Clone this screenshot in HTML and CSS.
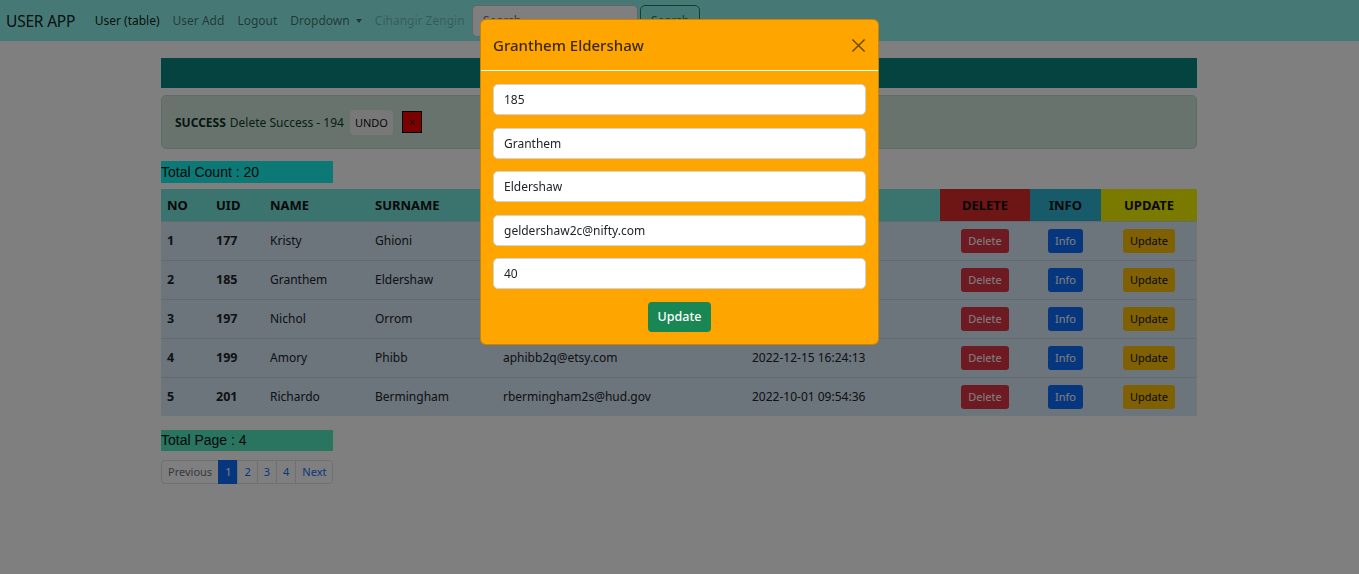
FILE: index.html
```html
<!DOCTYPE html>
<html lang="en">
<head>
<meta charset="utf-8">
<title>USER APP</title>
<link rel="stylesheet" href="styles.css">
</head>
<body>
<nav class="navbar">
  <a class="brand" href="#">USER APP</a>
  <ul class="nav">
    <li><a class="nav-link active" href="#">User (table)</a></li>
    <li><a class="nav-link" href="#">User Add</a></li>
    <li><a class="nav-link" href="#">Logout</a></li>
    <li><a class="nav-link dropdown" href="#">Dropdown <span class="caret"></span></a></li>
    <li><a class="nav-link disabled" href="#">Cihangir Zengin</a></li>
  </ul>
  <form class="search">
    <input class="search-input" type="text" placeholder="Search">
    <button class="search-btn" type="button">Search</button>
  </form>
</nav>

<main class="container">
  <div class="band"></div>
  <div class="alert">
    <strong>SUCCESS</strong>
    <span class="alert-text">Delete Success - 194</span>
    <button class="btn-undo" type="button">UNDO</button>
    <button class="btn-x" type="button">×</button>
  </div>
  <div class="count">Total Count : 20</div>
  <table class="table">
    <colgroup>
      <col class="c-no"><col class="c-uid"><col class="c-name"><col class="c-surname"><col class="c-email"><col class="c-date"><col class="c-del"><col class="c-info"><col class="c-upd">
    </colgroup>
    <thead>
      <tr>
        <th>NO</th>
        <th>UID</th>
        <th>NAME</th>
        <th>SURNAME</th>
        <th>EMAIL</th>
        <th>DATE</th>
        <th class="h-del">DELETE</th>
        <th class="h-info">INFO</th>
        <th class="h-upd">UPDATE</th>
      </tr>
    </thead>
    <tbody>
      <tr><td class="b">1</td><td class="b">177</td><td>Kristy</td><td>Ghioni</td><td>kghioni2m@example.com</td><td>2022-11-03 11:20:45</td><td class="ctr"><button class="btn btn-del">Delete</button></td><td class="ctr"><button class="btn btn-info">Info</button></td><td class="ctr"><button class="btn btn-upd">Update</button></td></tr>
      <tr><td class="b">2</td><td class="b">185</td><td>Granthem</td><td>Eldershaw</td><td>geldershaw2c@nifty.com</td><td>2022-09-21 08:12:10</td><td class="ctr"><button class="btn btn-del">Delete</button></td><td class="ctr"><button class="btn btn-info">Info</button></td><td class="ctr"><button class="btn btn-upd">Update</button></td></tr>
      <tr><td class="b">3</td><td class="b">197</td><td>Nichol</td><td>Orrom</td><td>norrom2o@example.com</td><td>2022-08-14 19:41:02</td><td class="ctr"><button class="btn btn-del">Delete</button></td><td class="ctr"><button class="btn btn-info">Info</button></td><td class="ctr"><button class="btn btn-upd">Update</button></td></tr>
      <tr><td class="b">4</td><td class="b">199</td><td>Amory</td><td>Phibb</td><td>aphibb2q@etsy.com</td><td>2022-12-15 16:24:13</td><td class="ctr"><button class="btn btn-del">Delete</button></td><td class="ctr"><button class="btn btn-info">Info</button></td><td class="ctr"><button class="btn btn-upd">Update</button></td></tr>
      <tr><td class="b">5</td><td class="b">201</td><td>Richardo</td><td>Bermingham</td><td>rbermingham2s@hud.gov</td><td>2022-10-01 09:54:36</td><td class="ctr"><button class="btn btn-del">Delete</button></td><td class="ctr"><button class="btn btn-info">Info</button></td><td class="ctr"><button class="btn btn-upd">Update</button></td></tr>
    </tbody>
  </table>
  <div class="pages">Total Page : 4</div>
  <ul class="pagination">
    <li class="pg disabled">Previous</li>
    <li class="pg active">1</li>
    <li class="pg">2</li>
    <li class="pg">3</li>
    <li class="pg">4</li>
    <li class="pg">Next</li>
  </ul>
</main>

<div class="backdrop"></div>
<div class="modal-wrap">
  <div class="modal">
    <div class="modal-header">
      <h5 class="modal-title">Granthem Eldershaw</h5>
      <button class="close" type="button" aria-label="Close">
        <svg width="15" height="15" viewBox="0 0 16 16"><path d="M1.5 1.5 L14.5 14.5 M14.5 1.5 L1.5 14.5" stroke="#6b4a00" stroke-width="1.6" fill="none"/></svg>
      </button>
    </div>
    <div class="modal-body">
      <input class="field" type="text" value="185">
      <input class="field" type="text" value="Granthem">
      <input class="field" type="text" value="Eldershaw">
      <input class="field" type="text" value="geldershaw2c@nifty.com">
      <input class="field" type="text" value="40">
      <button class="btn-save" type="button">Update</button>
    </div>
  </div>
</div>
</body>
</html>
```
FILE: styles.css
```css
* { box-sizing: border-box; }
body {
  margin: 0;
  background: #fff;
  font-family: "Noto Sans", "Open Sans", sans-serif;
  color: #212529;
  font-size: 12px;
}
a { text-decoration: none; }

.navbar {
  height: 41px;
  background: #8cf2ea;
  display: flex;
  align-items: center;
  padding: 0 6px;
}
.brand {
  font-size: 15.5px;
  color: rgba(0,0,0,.9);
  margin-right: 13px;
  letter-spacing: -0.2px;
}
.nav {
  list-style: none;
  margin: 0;
  padding: 0;
  display: flex;
}
.nav-link {
  display: block;
  padding: 0 6.5px;
  font-size: 12px;
  color: rgba(0,0,0,.55);
}
.nav-link.active { color: rgba(0,0,0,.9); }
.nav-link.disabled { color: rgba(0,0,0,.25); }
.caret {
  display: inline-block;
  width: 0; height: 0;
  border-left: 3.5px solid transparent;
  border-right: 3.5px solid transparent;
  border-top: 4px solid currentColor;
  vertical-align: 2px;
  margin-left: 3px;
}
.search { display: flex; gap: 2px; margin-left: 1px; }
.search-input {
  width: 166px;
  height: 32px;
  border: 1px solid #ccc;
  border-radius: 5px;
  padding: 0 10px;
  font: inherit;
  font-size: 12px;
  background: #fff;
}
.search-btn {
  height: 32px;
  padding: 0 10px;
  border: 1px solid #198754;
  border-radius: 5px;
  background: transparent;
  color: #198754;
  font: inherit;
  font-size: 12px;
}

.container {
  width: 1037px;
  margin: 17px auto 0;
}
.band {
  height: 30px;
  width: 1036px;
  background: #0a8682;
}
.alert {
  margin-top: 7px;
  width: 1036px;
  height: 54px;
  background: #d1e7dd;
  border: 1px solid #badbcc;
  border-radius: 5px;
  display: flex;
  align-items: center;
  padding: 0 13px;
  color: #0f3d28;
  font-size: 12px;
}
.alert strong { color: #0b2e1f; margin-right: 4px; }
.alert-text { margin-right: 6px; }
.btn-undo {
  height: 25px;
  padding: 0 5px;
  border: none;
  border-radius: 4px;
  background: #f0f0f0;
  color: #111;
  font: inherit;
  font-size: 11px;
  margin-right: 9px;
}
.btn-x {
  width: 20px;
  height: 22px;
  border: 1px solid #000;
  background: #f60000;
  color: #222;
  font-size: 11px;
  padding: 0;
  line-height: 1;
}
.count {
  margin-top: 12px;
  width: 172px;
  height: 22px;
  background: #1af2ee;
  font-family: "Liberation Sans", Arial, sans-serif;
  font-size: 14px;
  line-height: 22px;
  color: #111;
}
.table {
  margin-top: 6px;
  width: 1036px;
  border-collapse: collapse;
  table-layout: fixed;
  font-size: 12px;
}
.table th {
  height: 32px;
  background: #76e6de;
  text-align: left;
  font-weight: 700;
  padding: 0 6px;
  color: #111;
  font-size: 13px;
}
.table td {
  height: 39px;
  background: #d8e8f8;
  border-top: 1px solid #c6d4e2;
  padding: 0 6px;
  color: #212529;
}
.table td.b { font-weight: 700; font-size: 12.5px; }
.table .ctr, .table th.h-del, .table th.h-info, .table th.h-upd { text-align: center; }
.c-no { width: 49px; }
.c-uid { width: 54px; }
.c-name { width: 105px; }
.c-surname { width: 128px; }
.c-email { width: 249px; }
.c-date { width: 194px; }
.c-del { width: 90px; }
.c-info { width: 71px; }
.c-upd { width: 96px; }
.table th.h-del { background: #dc2a2a; }
.table th.h-info { background: #2eb4d4; }
.table th.h-upd { background: #f4f400; }
.btn {
  height: 24px;
  border: none;
  border-radius: 3px;
  font: inherit;
  font-size: 11px;
  padding: 0 7px;
}
.btn-del { background: #dc3545; color: #fff; }
.btn-info { background: #0d6efd; color: #fff; }
.btn-upd { background: #ffc107; color: #111; }
.pages {
  margin-top: 14px;
  width: 172px;
  height: 21px;
  background: #52eac0;
  font-family: "Liberation Sans", Arial, sans-serif;
  font-size: 14px;
  line-height: 21px;
  color: #111;
}
.pagination {
  list-style: none;
  margin: 9px 0 0;
  padding: 0;
  display: flex;
}
.pg {
  height: 24px;
  line-height: 22px;
  padding: 0 6px;
  border: 1px solid #dee2e6;
  margin-left: -1px;
  font-size: 11px;
  color: #0d6efd;
  background: #fff;
}
.pg:first-child { margin-left: 0; border-radius: 4px 0 0 4px; }
.pg:last-child { border-radius: 0 4px 4px 0; }
.pg.disabled { color: #6c757d; }
.pg.active { background: #0d6efd; border-color: #0d6efd; color: #fff; }

.backdrop {
  position: fixed;
  inset: 0;
  background: rgba(0,0,0,.5);
}
.modal-wrap {
  position: fixed;
  inset: 0;
  display: flex;
  justify-content: center;
  align-items: flex-start;
}
.modal {
  margin-top: 19px;
  width: 399px;
  flex: none;
  background: #ffa500;
  border: 1px solid rgba(0,0,0,.2);
  border-radius: 6px;
}
.modal-header {
  height: 51px;
  display: flex;
  align-items: center;
  justify-content: space-between;
  padding: 0 12px;
  border-bottom: 1px solid #fff;
}
.modal-title {
  margin: 0;
  font-size: 15px;
  font-weight: 500;
  color: #3a2a00;
}
.close {
  background: none;
  border: none;
  padding: 0;
  width: 16px;
  height: 16px;
  display: flex;
  align-items: center;
  justify-content: center;
}
.modal-body {
  padding: 13px 12px 12px;
  display: flex;
  flex-direction: column;
  align-items: center;
  gap: 12.5px;
}
.field {
  width: 100%;
  height: 31px;
  border: 1px solid #ced4da;
  border-radius: 5px;
  padding: 0 10px;
  font: inherit;
  font-size: 12px;
  color: #212529;
  background: #fff;
}
.btn-save {
  height: 30px;
  padding: 0 10px;
  border: none;
  border-radius: 4px;
  background: #198754;
  color: #fff;
  font: inherit;
  font-size: 12.5px;
  font-weight: 500;
}
```
